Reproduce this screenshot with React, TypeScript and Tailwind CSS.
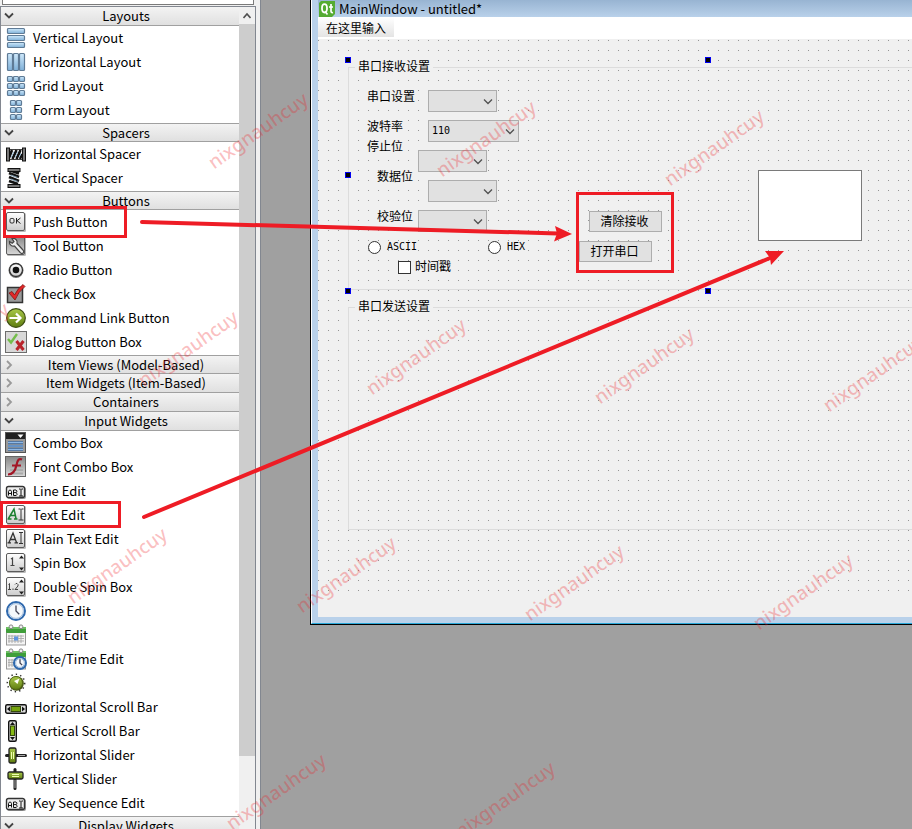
import type { ReactNode } from "react";

const BlueCell = ({ x, y, w, h }: { x: number; y: number; w: number; h: number }) => (
  <rect x={x + 0.5} y={y + 0.5} width={w - 1} height={h - 1} rx="1" fill="url(#cellBlue)" stroke="#5f7b96" strokeWidth="1.200" />
);

const Tile = ({ dark = false }: { dark?: boolean }) => (
  <>
    <rect x="2" y="2" width="19" height="19" rx="1.5" fill="#8a8a8a" opacity="0.6" />
    <rect x="1.5" y="1.5" width="18" height="18" rx="1.5" fill={dark ? "url(#tileDark)" : "url(#tileLight)"} stroke="#5c5c5c" />
  </>
);

const Abc = () => (
  <>
    <rect x="2" y="7" width="19" height="12" rx="2" fill="#999" />
    <rect x="1.5" y="6.5" width="18" height="11" rx="2" fill="#eee" stroke="#333" strokeWidth="1.4" />
    <path d="M3.5 15.500v-4l1-1.500h1l1 1.500v4M3.500 13.500h3M8.500 15.500v-5.500h2.500l.8.8v1l-.8.8h-2.500M11 12.600l1 .9v1.200l-.8.8h-2.700M14 9h1.500M16.500 9h1.500M16 9v7M14 16h4" fill="none" stroke="#111" strokeWidth="1" />
  </>
);

const Calendar = () => (
  <>
    <rect x="1.500" y="4.500" width="19" height="16.500" fill="#f4f4f4" stroke="#999" />
    <rect x="1" y="3" width="20" height="6" rx="1" fill="#3f9e3a" />
    <rect x="1" y="3" width="20" height="2" fill="#6cc063" />
    <path d="M4 11v8M7 11v8M10 11v8M13 11v8M16 11v8M3 12h16M3 14.500h16M3 17h16" stroke="#a9a9a9" strokeWidth="0.9" />
    <circle cx="6" cy="2.800" r="1.900" fill="#eee" stroke="#888" />
    <circle cx="16" cy="2.800" r="1.900" fill="#eee" stroke="#888" />
  </>
);

const Clock = ({ cx, cy, r }: { cx: number; cy: number; r: number }) => (
  <>
    <circle cx={cx} cy={cy} r={r} fill="#f5f8fb" stroke="#2e68ad" strokeWidth="2" />
    <circle cx={cx} cy={cy} r={r - 1.6} fill="none" stroke="#9fbbdb" strokeWidth="1" />
    <path d={`M${cx} ${cy - r * 0.62}V${cy}l${r * 0.36} ${r * 0.36}`} fill="none" stroke="#445" strokeWidth="1.3" />
  </>
);

const Spin = () => (
  <>
    <Tile />
    <path d="M14 6.500l2.500-3 2.500 3zM14 15.500l2.500 3 2.500-3z" fill="#222" />
  </>
);

const iconArt: Record<string, ReactNode> = {
  vlayout: (<><BlueCell x={2} y={1} w={18} h={6} /><BlueCell x={2} y={8} w={18} h={6} /><BlueCell x={2} y={15} w={18} h={6} /></>),
  hlayout: (<><BlueCell x={2} y={2} w={6} h={18} /><BlueCell x={8} y={2} w={6} h={18} /><BlueCell x={14} y={2} w={6} h={18} /></>),
  grid: (<>{[1, 8, 15].map((y) => [2, 8, 14].map((x) => <BlueCell key={`${x}-${y}`} x={x} y={y} w={6} h={6} />))}</>),
  form: (<>{[1, 8, 15].map((y) => [5, 11].map((x) => <BlueCell key={`${x}-${y}`} x={x} y={y} w={6} h={6} />))}</>),
  hspacer: (
    <>
      <path d="M4 6.500h13M4 16.500h13" stroke="#444" strokeWidth="1" />
      <path d="M4 15l3-8M7.500 16l4-9M11.500 16l4-9M15 16l2-5" stroke="#111" strokeWidth="2.600" />
      <path d="M6 14.500l3-6M10 14.500l3-6M14 14.500l2-4" stroke="#9cc0da" strokeWidth="1" />
      <rect x="1.500" y="5" width="3" height="13" fill="#777" stroke="#111" />
      <rect x="17.500" y="5" width="3" height="13" fill="#777" stroke="#111" />
    </>
  ),
  vspacer: (
    <>
      <path d="M4 6l10 4M4 10l10 4M4 14l9 3M7 4l7 2.500" stroke="#111" strokeWidth="2.800" />
      <path d="M5.500 8l7 2.500M5.500 12l7 2.500" stroke="#7e9bb0" strokeWidth="1.200" />
      <rect x="3" y="1.500" width="12" height="3" fill="#777" stroke="#111" />
      <rect x="3" y="17.500" width="12" height="3" fill="#777" stroke="#111" />
    </>
  ),
  push: (<><Tile /><rect x="5" y="7.500" width="4" height="4.500" rx="1.200" fill="none" stroke="#222" /><path d="M11.500 7v5.500M15.500 7l-3.500 2.700 3.500 2.800" fill="none" stroke="#222" /></>),
  tool: (<><Tile dark /><path d="M7 3.500a4 4 0 0 1 5 5L18 15c2 2-.5 5-2.700 2.700L9.500 11a4 4 0 0 1-5-4.500l2.700 1.800 1.800-1.700z" fill="#eee" stroke="#444" strokeWidth="1.200" /></>),
  radio: (<><circle cx="11" cy="11.500" r="7.500" fill="#777" /><circle cx="11" cy="11" r="6.500" fill="url(#tileLight)" stroke="#333" strokeWidth="1.300" /><circle cx="11" cy="11" r="3.300" fill="#111" /></>),
  check: (<><rect x="2.500" y="4.500" width="15" height="15" fill="#999" stroke="#333" strokeWidth="1.500" /><path d="M4 10l3-1.500L9.500 12Q13 5 18 1.500L20 3.500Q13 9 10 17z" fill="#e22828" stroke="#7d1515" strokeWidth="0.800" /></>),
  command: (<><circle cx="11" cy="11" r="9.300" fill="url(#green)" stroke="#3e4e12" strokeWidth="1.200" /><path d="M4.500 11h11M11 6.500l4.500 4.500-4.500 4.500" fill="none" stroke="#fff" strokeWidth="2.200" /></>),
  dialog: (<><rect x="0.500" y="0.500" width="21" height="21" fill="#d8d8d8" stroke="#6d6d6d" /><path d="M3 8l3 3.500L12 3" fill="none" stroke="#74bd4c" strokeWidth="2.400" /><path d="M11.500 10l7 9M18.500 10l-7 9" stroke="#b9232b" strokeWidth="3" /></>),
  combo: (<><rect x="0.500" y="0.500" width="20" height="20" fill="#999" stroke="#555" /><path d="M1 1h19v6H1z" fill="#222" /><path d="M12.500 2.500h6l-3 3.500z" fill="#fff" /><path d="M3 10.500h15M3 14h15M3 17.500h15" stroke="#3f6fa8" strokeWidth="2.600" /><path d="M3 10.500h15M3 14h15M3 17.500h15" stroke="#8db8e6" strokeWidth="1.200" /></>),
  font: (<><rect x="0.500" y="0.500" width="20" height="20" fill="url(#tileDark)" stroke="#666" /><path d="M5 10.500h13M5 14h13M5 17.500h13" stroke="#aaa" strokeWidth="2" /><path d="M17 3.500c-3-1.500-4.500.5-5.500 5.500S8.500 18.500 3 18.500M7 9.500h9" fill="none" stroke="#a31626" strokeWidth="2.200" /></>),
  abc: <Abc />,
  text: (<><Tile /><path d="M3.500 14.500L9 5l2 9.500M5.500 11.500h5M2.500 15h4M9 15h3.500" fill="none" stroke="#1d8030" strokeWidth="1.500" /><path d="M13.500 5h2M16.500 5h2M16 5v11M13.500 16h5" stroke="#333" /></>),
  plain: (<><Tile /><path d="M4 14.500L8 5l3.500 9.500M5.500 11.500h5M2.500 14.800h3.500M9.500 14.800H13" fill="none" stroke="#333" strokeWidth="1.300" /><path d="M14 4.500h4M16 4.500v11M14 15.500h4" stroke="#333" /></>),
  spin: (<><Spin /><path d="M6 7l1.500-1v7.500M5.500 13.500h4" fill="none" stroke="#444" strokeWidth="1.200" /></>),
  dspin: (<><Spin /><path d="M3.500 8.500l1-1v6M3 13.500h3M8 12.500v1.500M10 8.500l1-1h1l1 1v1.500l-3 3.500h3" fill="none" stroke="#444" /></>),
  time: <Clock cx={11} cy={11} r={9} />,
  date: (<><Calendar /><rect x="9" y="12.500" width="4" height="4" fill="#5d94e0" /></>),
  datetime: (<><Calendar /><Clock cx={15} cy={15} r={6} /></>),
  dial: (
    <>
      <circle cx="11" cy="11" r="8.700" fill="none" stroke="#333" strokeWidth="1.500" strokeDasharray="1.400 3.100" />
      <circle cx="11.500" cy="11.500" r="7.300" fill="#44530f" />
      <circle cx="11" cy="11" r="6.500" fill="url(#green)" stroke="#526817" />
      <path d="M14.500 6.500L12.500 12 9 9z" fill="#fff" />
    </>
  ),
  hscroll: (<><rect x="0.700" y="8.700" width="20.600" height="8.600" rx="1.500" fill="#ddd" stroke="#111" strokeWidth="1.400" /><rect x="6" y="10.500" width="9.500" height="5" fill="#74a20d" stroke="#33470b" /><path d="M5 10.500v5L2 13zM17 10.500v5l3-2.500z" fill="#111" /></>),
  vscroll: (<><rect x="3.700" y="0.700" width="7.600" height="20.600" rx="1.500" fill="#ddd" stroke="#111" strokeWidth="1.400" /><rect x="5.500" y="6" width="4" height="9.500" fill="#86b914" stroke="#33470b" /><path d="M5 5h5L7.500 2zM5 17h5l-2.500 3z" fill="#111" /></>),
  hslider: (<><path d="M1.500 11.500h19" stroke="#222" strokeWidth="3" strokeLinecap="round" /><path d="M13 11.500h7" stroke="#aaa" /><rect x="4" y="4" width="7" height="15" rx="1.500" fill="url(#green)" stroke="#222" strokeWidth="1.300" /><path d="M6.500 8v7M8.500 8v7" stroke="#efffb0" /></>),
  vslider: (<><path d="M10 1.500v19" stroke="#222" strokeWidth="3" strokeLinecap="round" /><path d="M10 12v8" stroke="#aaa" /><rect x="3" y="4" width="15" height="7" rx="1.500" fill="url(#green)" stroke="#222" strokeWidth="1.300" /><path d="M7 6.500h7M7 8.500h7" stroke="#efffb0" /></>),
};

const Icon = ({ name }: { name: string }) => (
  <svg viewBox="0 0 22 22" className="size-[22px] shrink-0" aria-hidden="true">
    {iconArt[name]}
  </svg>
);

const groups: { title: string; open: boolean; items: [string, string][] }[] = [
  { title: "Layouts", open: true, items: [["vlayout", "Vertical Layout"], ["hlayout", "Horizontal Layout"], ["grid", "Grid Layout"], ["form", "Form Layout"]] },
  { title: "Spacers", open: true, items: [["hspacer", "Horizontal Spacer"], ["vspacer", "Vertical Spacer"]] },
  {
    title: "Buttons",
    open: true,
    items: [["push", "Push Button"], ["tool", "Tool Button"], ["radio", "Radio Button"], ["check", "Check Box"], ["command", "Command Link Button"], ["dialog", "Dialog Button Box"]],
  },
  { title: "Item Views (Model-Based)", open: false, items: [] },
  { title: "Item Widgets (Item-Based)", open: false, items: [] },
  { title: "Containers", open: false, items: [] },
  {
    title: "Input Widgets",
    open: true,
    items: [
      ["combo", "Combo Box"], ["font", "Font Combo Box"], ["abc", "Line Edit"], ["text", "Text Edit"], ["plain", "Plain Text Edit"], ["spin", "Spin Box"],
      ["dspin", "Double Spin Box"], ["time", "Time Edit"], ["date", "Date Edit"], ["datetime", "Date/Time Edit"], ["dial", "Dial"],
      ["hscroll", "Horizontal Scroll Bar"], ["vscroll", "Vertical Scroll Bar"], ["hslider", "Horizontal Slider"], ["vslider", "Vertical Slider"], ["abc", "Key Sequence Edit"],
    ],
  },
  { title: "Display Widgets", open: true, items: [] },
];

function WidgetBox() {
  return (
    <aside className="flex w-[261px] shrink-0 flex-col border-r border-[#828790] bg-[#f0f0f0] pr-1">
      <input aria-label="Filter" className="mx-[2px] h-[5px] shrink-0 border border-t-0 border-[#7a7a7a] bg-white" />
      <div className="mt-px flex min-h-0 flex-1 border border-b-0 border-[#828790] bg-white">
        <div className="min-w-0 flex-1 overflow-hidden">
          {groups.map((group, index) => (
            <section key={group.title}>
              <button
                type="button"
                aria-expanded={group.open}
                className={`relative flex h-[19px] w-full items-center justify-center border-b border-[#a0a0a0] bg-linear-to-b from-[#f3f3f3] to-[#e0e0e0] pl-3 ${index > 0 && groups[index - 1].open ? "border-t" : ""}`}
              >
                <svg viewBox="0 0 10 10" className="absolute left-[3px] size-[10px]" fill="none" strokeWidth="1.800" aria-hidden="true">
                  <path d={group.open ? "M1 2.500l4 4 4-4" : "M3 1l4 4-4 4"} stroke={group.open ? "#444" : "#999"} />
                </svg>
                {group.title}
              </button>
              {group.items.length > 0 && (
                <ul className="pb-px">
                  {group.items.map(([icon, label]) => (
                    <li key={label} className="flex h-6 items-center gap-[6px] pl-1">
                      <Icon name={icon} />
                      <span className="whitespace-nowrap">{label}</span>
                    </li>
                  ))}
                </ul>
              )}
            </section>
          ))}
        </div>
        <div className="flex w-4 shrink-0 flex-col bg-[#f0f0f0]">
          <button type="button" aria-label="Scroll up" className="flex h-[17px] shrink-0 items-center justify-center">
            <svg viewBox="0 0 8 8" className="size-2" fill="none" stroke="#505050" strokeWidth="1.600" aria-hidden="true">
              <path d="M0.500 6l3.500-4 3.500 4" />
            </svg>
          </button>
          <div className="h-[89%] bg-[#cdcdcd]" />
        </div>
      </div>
    </aside>
  );
}

const combos = [
  { id: "port", label: "串口设置", value: "", labelAt: "left-[49px] top-[50px]", boxAt: "left-[110px] top-[51px] w-[69px]" },
  { id: "baud", label: "波特率", value: "110", labelAt: "left-[49px] top-[80px]", boxAt: "left-[110px] top-[81px] w-[91px]" },
  { id: "stop", label: "停止位", value: "", labelAt: "left-[49px] top-[100px]", boxAt: "left-[100px] top-[111px] w-[69px]" },
  { id: "data", label: "数据位", value: "", labelAt: "left-[59px] top-[130px]", boxAt: "left-[110px] top-[141px] w-[69px]" },
  { id: "parity", label: "校验位", value: "", labelAt: "left-[59px] top-[170px]", boxAt: "left-[100px] top-[171px] w-[69px]" },
];

const handles = [
  "left-[27px] top-[18px]",
  "left-[387px] top-[18px]",
  "left-[27px] top-[133px]",
  "left-[27px] top-[249px]",
  "left-[387px] top-[249px]",
];

function FormCanvas() {
  return (
    <div className="relative h-[578px] overflow-hidden bg-[#f0f0f0] font-['Liberation_Sans','Noto_Sans_CJK_SC',sans-serif] text-xs leading-4 text-black">
      <svg className="absolute left-0 top-0 h-[560px] w-full" aria-hidden="true">
        <defs>
          <pattern id="dots" width="10" height="10" patternUnits="userSpaceOnUse">
            <rect x="0" y="1" width="1" height="1" fill="#949494" />
          </pattern>
        </defs>
        <rect width="100%" height="100%" fill="url(#dots)" />
      </svg>

      <fieldset className="absolute left-[30px] top-[19px] h-[232px] w-[720px] border border-[#dcdcdc] pl-[6px]">
        <legend className="bg-[#f0f0f0] px-[3px] leading-[18px]">串口接收设置</legend>
      </fieldset>
      <fieldset className="absolute left-[30px] top-[259px] h-[232px] w-[720px] border border-[#dcdcdc] pl-[6px]">
        <legend className="bg-[#f0f0f0] px-[3px] leading-[18px]">串口发送设置</legend>
      </fieldset>

      {combos.map((c) => (
        <div key={c.id}>
          <label htmlFor={c.id} className={`absolute bg-[#f0f0f0] ${c.labelAt}`}>
            {c.label}
          </label>
          <div className={`absolute h-[22px] ${c.boxAt}`}>
            <select
              id={c.id}
              defaultValue={c.value}
              className="size-full appearance-none border border-[#adadad] bg-[#e1e1e1] pl-[3px] font-['DejaVu_Sans_Mono',monospace] text-[10px]"
            >
              <option value={c.value}>{c.value}</option>
            </select>
            <svg viewBox="0 0 10 10" className="pointer-events-none absolute right-1 top-[6px] size-[10px]" fill="none" stroke="#505050" strokeWidth="1.300" aria-hidden="true">
              <path d="M1 3.500l4 4 4-4" />
            </svg>
          </div>
        </div>
      ))}

      <label className="absolute left-[50px] top-[200px] flex h-4 items-center gap-[6px] font-['DejaVu_Sans_Mono',monospace] text-[10px]">
        <input type="radio" name="format" className="size-[13px] appearance-none rounded-full border border-[#333] bg-white" />
        ASCII
      </label>
      <label className="absolute left-[170px] top-[200px] flex h-4 items-center gap-[6px] font-['DejaVu_Sans_Mono',monospace] text-[10px]">
        <input type="radio" name="format" className="size-[13px] appearance-none rounded-full border border-[#333] bg-white" />
        HEX
      </label>
      <label className="absolute left-[80px] top-[220px] flex h-4 items-center gap-1 leading-[18px]">
        <input type="checkbox" className="size-[13px] appearance-none border border-[#333] bg-white" />
        时间戳
      </label>

      <button type="button" className="absolute left-[271px] top-[172px] h-[21px] w-[73px] border border-[#adadad] bg-[#e1e1e1] pt-px pr-[2px]">
        清除接收
      </button>
      <button type="button" className="absolute left-[261px] top-[202px] h-[21px] w-[73px] border border-[#adadad] bg-[#e1e1e1] pt-px pr-[2px]">
        打开串口
      </button>
      <textarea aria-label="Text edit" className="absolute left-[440px] top-[131px] h-[71px] w-[104px] resize-none border border-[#7a7a7a] bg-white" />

      {handles.map((at) => (
        <i key={at} className={`absolute size-[6px] border border-[#0000f0] bg-black ${at}`} />
      ))}
    </div>
  );
}

function DesignedWindow() {
  return (
    <section className="border-b border-l border-black">
      <div className="border-b border-l border-b-[#29a8d8] border-l-white bg-[#b9d1ea] pb-[6px] pl-[6px]">
        <header className="flex h-[17px] items-center gap-1 bg-linear-to-b from-[#98b4d2] to-[#b9d1ea] pl-px">
          <svg viewBox="0 0 16 16" className="size-4" aria-hidden="true">
            <path d="M2 0h14v13l-3 3H0V2z" fill="#55ab32" />
            <ellipse cx="5.500" cy="7.300" rx="2.500" ry="4.200" fill="none" stroke="#fff" strokeWidth="1.800" />
            <path d="M6 10.500l2.500 3M12 3v7q0 2 2 1.500M10 6h4" fill="none" stroke="#fff" strokeWidth="1.700" />
          </svg>
          <h1 className="whitespace-nowrap">MainWindow - untitled*</h1>
        </header>
        <nav className="flex h-[22px] bg-white pb-[2px] font-['Noto_Sans_CJK_SC',sans-serif] text-xs">
          <button type="button" className="bg-linear-to-b from-white to-[#e4e4e4] px-2 pt-[2px]">在这里输入</button>
        </nav>
        <FormCanvas />
      </div>
    </section>
  );
}

const watermarks: [number, number][] = [
  [259, 132], [487, 140], [715, 149],
  [-40, 342], [189, 350], [417, 358], [645, 367], [874, 375],
  [118, 567], [347, 576], [575, 584], [804, 593],
  [277, 793], [506, 801],
];

function Annotations() {
  return (
    <svg className="pointer-events-none absolute left-0 top-0 h-full w-full" aria-hidden="true">
      <g fill="#ee1c25" fillOpacity="0.28" className="font-['Noto_Sans',sans-serif] text-[19px] font-medium" textAnchor="middle">
        {watermarks.map(([x, y]) => (
          <text key={`${x}-${y}`} x={x} y={y + 5} transform={`rotate(-35 ${x} ${y})`}>
            nixgnauhcuy
          </text>
        ))}
      </g>
      <g fill="none" stroke="#ee1c25" strokeWidth="3">
        <rect x="4.500" y="207.500" width="121" height="29" />
        <rect x="1.500" y="502.500" width="118" height="24" />
        <rect x="577.500" y="193.500" width="95" height="78" />
      </g>
      <g stroke="#ee1c25" strokeWidth="4" strokeLinecap="round">
        <path d="M142 222L558 233.500" />
        <path d="M144 517L770 258" />
      </g>
      <g fill="#ee1c25">
        <path d="M572 234L554 241.500 557 233.500 555 226z" />
        <path d="M784 251L771 265 770 258 765 251z" />
      </g>
    </svg>
  );
}

export default function App() {
  return (
    <div className="relative flex h-screen w-full overflow-hidden bg-[#a0a0a0] font-['Noto_Sans_CJK_SC',sans-serif] text-[13px] leading-4 text-black">
      <svg className="absolute size-0" aria-hidden="true">
        <defs>
          <linearGradient id="cellBlue" x2="0" y2="1"><stop stopColor="#cfe9fb" /><stop offset="1" stopColor="#7fb0d8" /></linearGradient>
          <linearGradient id="tileLight" x2="0" y2="1"><stop stopColor="#fff" /><stop offset="1" stopColor="#ccc" /></linearGradient>
          <linearGradient id="tileDark" x2="0" y2="1"><stop stopColor="#888" /><stop offset="1" stopColor="#d8d8d8" /></linearGradient>
          <linearGradient id="green" x2="0" y2="1"><stop stopColor="#a9c94a" /><stop offset="1" stopColor="#5f7d10" /></linearGradient>
        </defs>
      </svg>
      <WidgetBox />
      <main className="min-w-0 flex-1 pl-[49px]">
        <DesignedWindow />
      </main>
      <Annotations />
    </div>
  );
}
